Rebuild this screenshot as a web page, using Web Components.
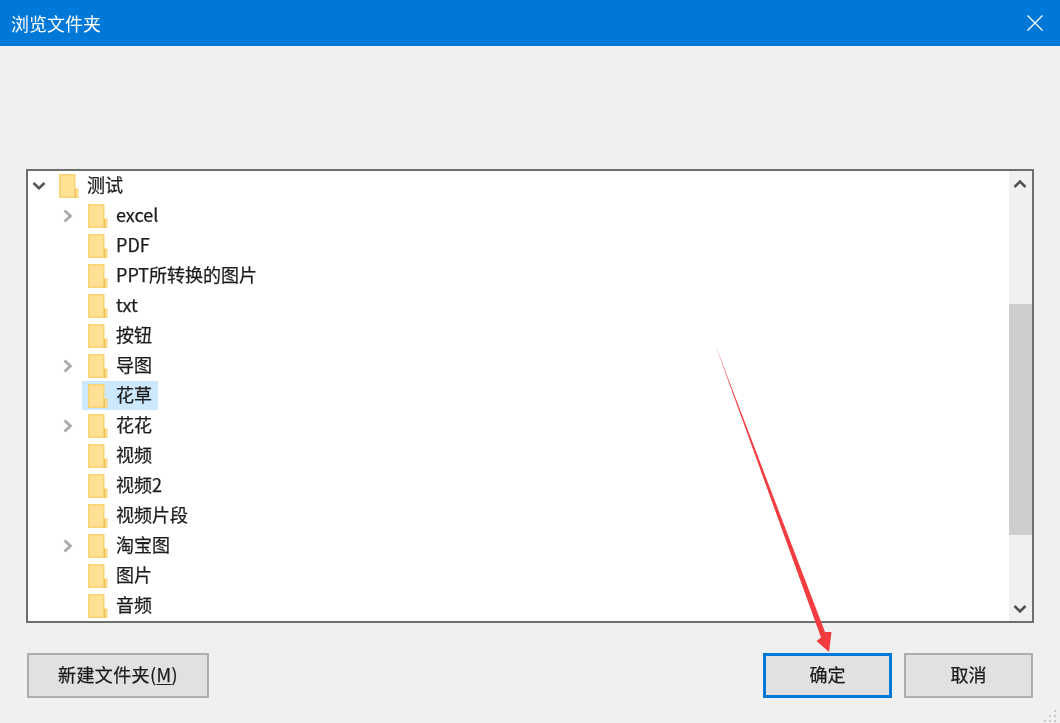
<!DOCTYPE html>
<html lang="zh">
<head>
<meta charset="utf-8">
<title>浏览文件夹</title>
<style>
  html, body { margin: 0; height: 100%; }
  body { font-family: "Noto Sans CJK SC", "Noto Sans", sans-serif; background: #f0f0f0; overflow: hidden; }
</style>
</head>
<body>
<folder-dialog heading="浏览文件夹">
  <tree-row level="0" expand="open">测试</tree-row>
  <tree-row level="1" expand="closed">excel</tree-row>
  <tree-row level="1">PDF</tree-row>
  <tree-row level="1">PPT所转换的图片</tree-row>
  <tree-row level="1">txt</tree-row>
  <tree-row level="1">按钮</tree-row>
  <tree-row level="1" expand="closed">导图</tree-row>
  <tree-row level="1" selected>花草</tree-row>
  <tree-row level="1" expand="closed">花花</tree-row>
  <tree-row level="1">视频</tree-row>
  <tree-row level="1">视频2</tree-row>
  <tree-row level="1">视频片段</tree-row>
  <tree-row level="1" expand="closed">淘宝图</tree-row>
  <tree-row level="1">图片</tree-row>
  <tree-row level="1">音频</tree-row>
</folder-dialog>

<script>
class TreeRow extends HTMLElement {
  constructor() {
    super();
    this.attachShadow({ mode: "open" });
  }

  connectedCallback() {
    const level = Number(this.getAttribute("level") || 0);
    const expand = this.getAttribute("expand");
    let chevron = "";
    if (expand === "open") {
      chevron = `<svg width="16" height="12" viewBox="0 0 16 12"><path d="M2.500 3l5.500 5.200L13.500 3" fill="none" stroke="#555" stroke-width="2.600"/></svg>`;
    } else if (expand === "closed") {
      chevron = `<svg width="12" height="16" viewBox="0 0 12 16"><path d="M2.500 2.500L8.500 8l-6 5.500" fill="none" stroke="#a8a8a8" stroke-width="2.600"/></svg>`;
    }
    this.shadowRoot.innerHTML = `
      <style>
        :host {
          display: flex;
          align-items: flex-start;
          height: 30px;
          padding-left: ${level * 29}px;
          font-size: 18px;
          color: #1c1c1c;
        }
        .chev { width: 22px; height: 29px; display: flex; align-items: center; justify-content: center; flex: none; margin-right: 3px; }
        .item { display: flex; align-items: center; height: 29px; padding: 0 6px; }
        :host([selected]) .item { background: #cce8ff; }
        .folder { flex: none; display: block; }
        .label { margin-left: 8px; line-height: 27px; padding-bottom: 2px; white-space: nowrap; filter: blur(.45px); -webkit-text-stroke: .25px #1c1c1c; }
      </style>
      <span class="chev">${chevron}</span>
      <span class="item">
        <svg class="folder" width="20" height="24" viewBox="0 0 20 24">
          <path d="M0 0h16.500v14.500h3v9.500H0z" fill="#f9d475"/>
          <path d="M1.500 1.500h13.500v21H1.500z" fill="#fee193"/>
          <path d="M16.500 15v9" stroke="#edc05a" stroke-width="1.200"/>
          <path d="M17.500 16h1v6.500h-1z" fill="#fde6a4"/>
        </svg>
        <span class="label"><slot></slot></span>
      </span>
    `;
  }
}
customElements.define("tree-row", TreeRow);

class DialogButton extends HTMLElement {
  constructor() {
    super();
    this.attachShadow({ mode: "open" });
    this.shadowRoot.innerHTML = `
      <style>
        :host {
          display: flex;
          align-items: center;
          justify-content: center;
          box-sizing: border-box;
          height: 45px;
          background: #e1e1e1;
          border: 2px solid #adadad;
          font-size: 18px;
          color: #1c1c1c;
        }
        :host([default]) { border: 3px solid #0078d7; }
        span { padding-bottom: 3px; filter: blur(.45px); white-space: nowrap; -webkit-text-stroke: .25px #1c1c1c; }
        :host(.new) span { letter-spacing: .4px; }
      </style>
      <span><slot></slot></span>
    `;
  }
}
customElements.define("dialog-button", DialogButton);

class FolderDialog extends HTMLElement {
  constructor() {
    super();
    this.attachShadow({ mode: "open" });
  }

  connectedCallback() {
    this.shadowRoot.innerHTML = `
      <style>
        :host { display: flex; flex-direction: column; position: relative; width: 1060px; height: 723px; background: #f0f0f0; }
        .title {
          display: flex; align-items: center; justify-content: space-between;
          height: 46px; flex: none; box-sizing: border-box; padding: 0 16px 0 11px;
          background: #0078d7; color: #fff; font-size: 18px;
        }
        .title span { padding-bottom: 1px; filter: blur(.3px); }
        .title svg { display: block; }
        .body { flex: 1; display: flex; flex-direction: column; padding: 123px 26px 0 26px; }
        .tree {
          box-sizing: border-box; height: 454px; border: 2px solid #6e6e6e;
          background: #fff; display: flex;
        }
        .rows { flex: 1; overflow: hidden; }
        .scroll { width: 23px; flex: none; background: #f0f0f0; display: flex; flex-direction: column; }
        .arrow { height: 24px; flex: none; display: flex; align-items: center; justify-content: center; }
        .arrow svg { margin-right: 1px; }
        .arrow.up svg { margin-top: 2px; }
        .track { flex: 1; display: flex; flex-direction: column; }
        .thumb { margin-top: 109px; height: 231px; background: #cdcdcd; }
        .actions { display: flex; gap: 12px; margin-top: 30px; padding: 0 1px; }
        .new { width: 182px; }
        .ok { width: 129px; margin-left: auto; }
        .cancel { width: 129px; }
        u { text-underline-offset: 2px; }
        .overlay { position: absolute; left: 0; top: 0; pointer-events: none; }
      </style>
      <div class="title">
        <span>${this.getAttribute("heading")}</span>
        <svg width="18" height="18" viewBox="0 0 18 18"><path d="M1.500 1.500l15 15M16.500 1.500l-15 15" stroke="#fff" stroke-width="1.300" fill="none"/></svg>
      </div>
      <div class="body">
        <div class="tree">
          <div class="rows"><slot></slot></div>
          <div class="scroll">
            <div class="arrow up"><svg width="14" height="10" viewBox="0 0 14 10"><path d="M1.500 8l5.500-5.500L12.500 8" fill="none" stroke="#505050" stroke-width="2.600"/></svg></div>
            <div class="track"><div class="thumb"></div></div>
            <div class="arrow"><svg width="14" height="10" viewBox="0 0 14 10"><path d="M1.500 2l5.500 5.500L12.500 2" fill="none" stroke="#505050" stroke-width="2.600"/></svg></div>
          </div>
        </div>
        <div class="actions">
          <dialog-button class="new">新建文件夹(<u>M</u>)</dialog-button>
          <dialog-button class="ok" default>确定</dialog-button>
          <dialog-button class="cancel">取消</dialog-button>
        </div>
      </div>
      <svg class="overlay" width="1060" height="723" viewBox="0 0 1060 723">
        <path d="M715 344L825 632 831.500 632 829 652 816.500 641 821 637.500Z" fill="#f23c3f"/>
        <g fill="#c8c8c8">
          <rect x="1054" y="710" width="2" height="2"/>
          <rect x="1049" y="715" width="2" height="2"/><rect x="1054" y="715" width="2" height="2"/>
          <rect x="1044" y="720" width="2" height="2"/><rect x="1049" y="720" width="2" height="2"/><rect x="1054" y="720" width="2" height="2"/>
        </g>
      </svg>
    `;
  }
}
customElements.define("folder-dialog", FolderDialog);
</script>
</body>
</html>
